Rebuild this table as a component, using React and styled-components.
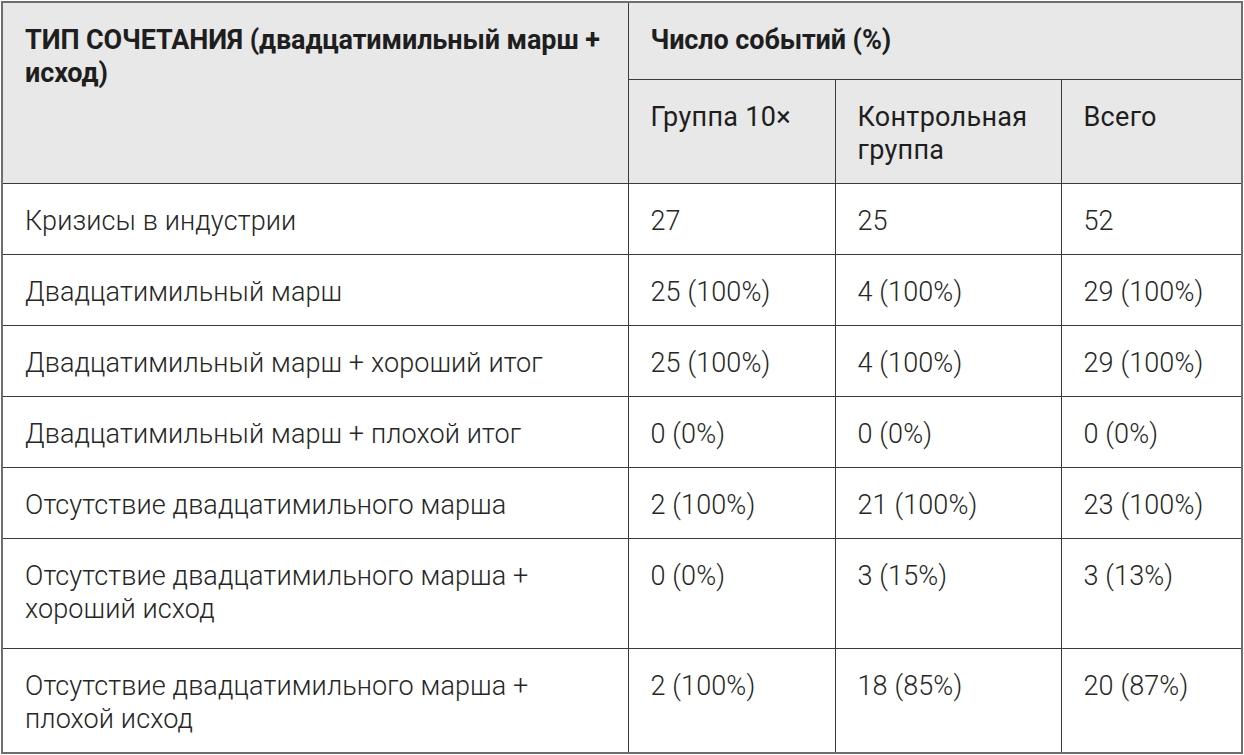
import styled, { createGlobalStyle } from 'styled-components';

const rows = [
    { label: 'Кризисы в индустрии', values: ['27', '25', '52'], height: 71 },
    { label: 'Двадцатимильный марш', values: ['25 (100%)', '4 (100%)', '29 (100%)'], height: 71 },
    { label: 'Двадцатимильный марш + хороший итог', values: ['25 (100%)', '4 (100%)', '29 (100%)'], height: 71 },
    { label: 'Двадцатимильный марш + плохой итог', values: ['0 (0%)', '0 (0%)', '0 (0%)'], height: 71 },
    { label: 'Отсутствие двадцатимильного марша', values: ['2 (100%)', '21 (100%)', '23 (100%)'], height: 71 },
    { label: 'Отсутствие двадцатимильного марша + хороший исход', values: ['0 (0%)', '3 (15%)', '3 (13%)'], height: 110 },
    { label: 'Отсутствие двадцатимильного марша + плохой исход', values: ['2 (100%)', '18 (85%)', '20 (87%)'], height: 105 },
];

function App() {
    return (
        <>
            <GlobalStyle />
            <Table>
                <colgroup>
                    <col style={{ width: '626px' }} />
                    <col style={{ width: '207px' }} />
                    <col style={{ width: '226px' }} />
                    <col style={{ width: '181px' }} />
                </colgroup>
                <thead>
                    <Row $height={77}>
                        <HeadCell rowSpan={2} $bold>
                            ТИП СОЧЕТАНИЯ (двадцатимильный марш + исход)
                        </HeadCell>
                        <HeadCell colSpan={3} $bold>
                            Число событий (%)
                        </HeadCell>
                    </Row>
                    <Row $height={104}>
                        <HeadCell>Группа 10×</HeadCell>
                        <HeadCell>
                            Контрольная
                            <br />
                            группа
                        </HeadCell>
                        <HeadCell>Всего</HeadCell>
                    </Row>
                </thead>
                <tbody>
                    {rows.map((row) => (
                        <Row key={row.label} $height={row.height}>
                            <Cell>{row.label}</Cell>
                            {row.values.map((v, i) => (
                                <Cell key={i}>{v}</Cell>
                            ))}
                        </Row>
                    ))}
                </tbody>
            </Table>
        </>
    );
}

export default App;

//---- STYLING ----//
const GlobalStyle = createGlobalStyle`
    html, body {
        margin: 0;
        padding: 0;
        background: #ffffff;
    }
    body {
        padding: 1px 0 0 1px;
        font-family: Roboto, 'Liberation Sans', sans-serif;
    }
`;

const Table = styled.table`
    width: 1241px;
    table-layout: fixed;
    border-collapse: collapse;
    border: 2px solid #6e6e6e;
`;

const Row = styled.tr`
    height: ${(p) => p.$height}px;
`;

const HeadCell = styled.th`
    background: #e8e8e8;
    border: 1px solid #3a3a3a;
    vertical-align: top;
    text-align: left;
    padding: 21px 24px 0 22px;
    font-size: 27px;
    line-height: 33px;
    font-weight: ${(p) => (p.$bold ? 700 : 400)};
    color: #1e1e1e;
    letter-spacing: ${(p) => (p.$bold ? '-0.1px' : '0.3px')};
`;

const Cell = styled.td`
    background: #ffffff;
    border: 1px solid #3a3a3a;
    vertical-align: top;
    padding: 21px 24px 0 22px;
    font-size: 27px;
    line-height: 33px;
    font-weight: 300;
    color: #262626;
    letter-spacing: 0.12px;
`;
